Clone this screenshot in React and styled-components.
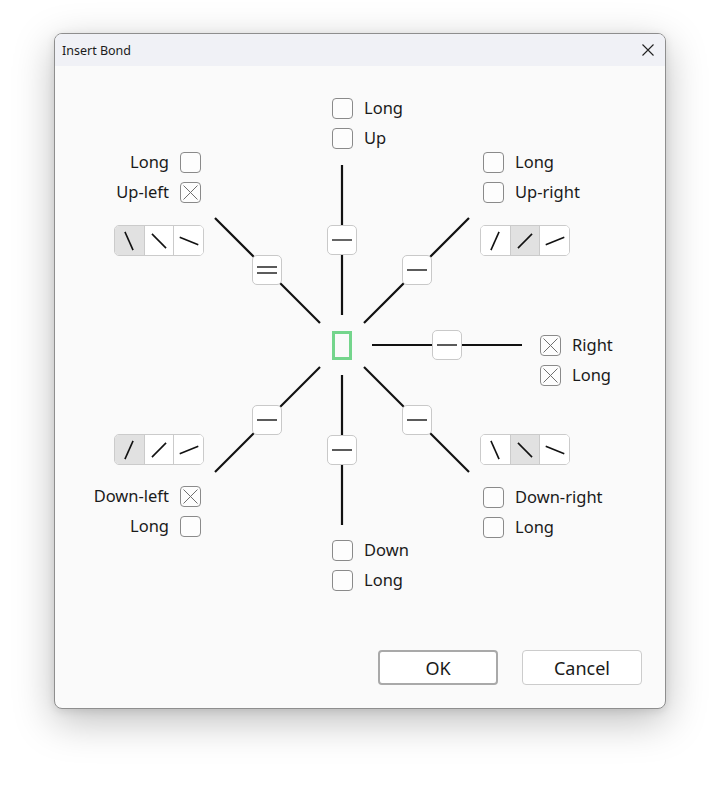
import React from 'react'
import styled, {createGlobalStyle} from 'styled-components'

const Global = createGlobalStyle`
  body {
    margin: 0;
    background: #ffffff;
    font-family: "Noto Sans", "Open Sans", sans-serif;
  }
`

const Page = styled.div`
  padding: 33px 0 0 54px;
  height: 800px;
  box-sizing: border-box;
`

const Dialog = styled.div`
  width: 612px;
  height: 676px;
  box-sizing: border-box;
  border: 1px solid #8e8e8e;
  border-radius: 8px;
  background: #fafafa;
  box-shadow: 0 12px 40px rgba(0, 0, 0, 0.26), 0 2px 8px rgba(0, 0, 0, 0.1);
  display: flex;
  flex-direction: column;
  overflow: hidden;
`

const TitleBar = styled.div`
  height: 32px;
  flex: none;
  background: #f0f1f6;
  display: flex;
  align-items: center;
  justify-content: space-between;
  padding: 0 11px 0 7px;
  font-size: 12.5px;
  color: #1b1b1b;
`

const Close = styled.svg`
  width: 12px;
  height: 12px;
`

const Canvas = styled.div`
  position: relative;
  height: 570px;
  flex: none;
`

const Bonds = styled.svg`
  position: absolute;
  inset: 0;
  width: 100%;
  height: 100%;
`

const Atom = styled.div`
  position: absolute;
  left: 277px;
  top: 265px;
  width: 20px;
  height: 29px;
  box-sizing: border-box;
  border: 3px solid #74d58c;
`

const BondButton = styled.div`
  position: absolute;
  left: ${p => p.$x - 15}px;
  top: ${p => p.$y - 15}px;
  width: 30px;
  height: 30px;
  box-sizing: border-box;
  border: 1px solid #c9c9c9;
  border-radius: 5px;
  background: #ffffff;
  display: flex;
  align-items: center;
  justify-content: center;
`

const CheckGroup = styled.div`
  position: absolute;
  top: ${p => p.$y}px;
  ${p => (p.$flip ? `right: ${610 - p.$x}px;` : `left: ${p.$x}px;`)}
  display: flex;
  flex-direction: column;
  align-items: ${p => (p.$flip ? 'flex-end' : 'flex-start')};
  gap: 9px;
`

const Row = styled.label`
  display: flex;
  flex-direction: ${p => (p.$flip ? 'row-reverse' : 'row')};
  align-items: center;
  gap: 11px;
  height: 21px;
  font-size: 16.5px;
  line-height: 20px;
  color: #1a1a1a;
  white-space: nowrap;
  & > span:last-child {
    margin-top: -2px;
  }
`

const Box = styled.span`
  width: 21px;
  height: 21px;
  box-sizing: border-box;
  border: 1px solid #8a8a8a;
  border-radius: 4px;
  background: #fdfdfd;
  display: flex;
  align-items: center;
  justify-content: center;
`

const Segmented = styled.div`
  position: absolute;
  left: ${p => p.$x}px;
  top: ${p => p.$y}px;
  width: 90px;
  height: 31px;
  box-sizing: border-box;
  border: 1px solid #cbcbcb;
  border-radius: 5px;
  background: #ffffff;
  display: flex;
  overflow: hidden;
`

const Segment = styled.div`
  flex: 1;
  display: flex;
  align-items: center;
  justify-content: center;
  background: ${p => (p.$on ? '#e1e1e1' : '#ffffff')};
  & + & {
    border-left: 1px solid #cbcbcb;
  }
`

const Footer = styled.div`
  flex: 1;
  display: flex;
  justify-content: flex-end;
  align-items: flex-start;
  gap: 24px;
  padding: 14px 23px 0 0;
`

const Button = styled.button`
  width: 120px;
  height: 35px;
  box-sizing: border-box;
  border: ${p => (p.$primary ? '2px solid #a9a9a9' : '1px solid #cccccc')};
  border-radius: 4px;
  background: #ffffff;
  font-family: "Noto Sans", "Open Sans", sans-serif;
  font-size: 18px;
  color: #1a1a1a;
  padding: 0;
`

const C = {x: 287, y: 279}
const dirs = [
  [0, -1], [1, -1], [1, 0], [1, 1], [0, 1], [-1, 1], [-1, -1],
]

function BondLines() {
  return (
    <Bonds>
      {dirs.map(([dx, dy], i) => {
        const diag = dx !== 0 && dy !== 0
        const a = diag ? 22 : 30
        const b = diag ? 127 : 180
        return (
          <line key={i} x1={C.x + dx * a} y1={C.y + dy * a} x2={C.x + dx * b} y2={C.y + dy * b}
                stroke="#111" strokeWidth="2.2"/>
        )
      })}
    </Bonds>
  )
}

function Bond({x, y, double}) {
  return (
    <BondButton $x={x} $y={y}>
      <svg width="22" height="12" viewBox="0 0 22 12">
        {double ? (
          <>
            <line x1="1" y1="3" x2="21" y2="3" stroke="#333" strokeWidth="1.6"/>
            <line x1="1" y1="9" x2="21" y2="9" stroke="#333" strokeWidth="1.6"/>
          </>
        ) : (
          <line x1="1" y1="6" x2="21" y2="6" stroke="#333" strokeWidth="1.6"/>
        )}
      </svg>
    </BondButton>
  )
}

function Check({label, checked, flip}) {
  return (
    <Row $flip={flip}>
      <Box>
        {checked && (
          <svg width="17" height="17" viewBox="0 0 17 17">
            <path d="M1.5 1.5 L15.5 15.5 M15.5 1.5 L1.5 15.5" stroke="#6f6f6f" strokeWidth="1"/>
          </svg>
        )}
      </Box>
      <span>{label}</span>
    </Row>
  )
}

function Slant({deg, back}) {
  const r = (deg * Math.PI) / 180
  const dx = Math.cos(r) * 10
  const dy = Math.sin(r) * 10
  const s = back ? 1 : -1
  return (
    <svg width="24" height="24" viewBox="0 0 24 24">
      <line x1={12 - dx} y1={12 - s * dy} x2={12 + dx} y2={12 + s * dy} stroke="#111" strokeWidth="1.6"/>
    </svg>
  )
}

function Angles({x, y, back, on}) {
  return (
    <Segmented $x={x} $y={y}>
      {[66, 45, 22].map((d, i) => (
        <Segment key={d} $on={i === on}>
          <Slant deg={d} back={back}/>
        </Segment>
      ))}
    </Segmented>
  )
}

export default function App() {
  return (
    <Page>
      <Global/>
      <Dialog>
        <TitleBar>
          <span>Insert Bond</span>
          <Close viewBox="0 0 12 12">
            <path d="M0.5 0.5 L11.5 11.5 M11.5 0.5 L0.5 11.5" stroke="#222" strokeWidth="1.1"/>
          </Close>
        </TitleBar>
        <Canvas>
          <BondLines/>
          <Atom/>
          <Bond x={287} y={174}/>
          <Bond x={362} y={204}/>
          <Bond x={392} y={279}/>
          <Bond x={362} y={354}/>
          <Bond x={287} y={384}/>
          <Bond x={212} y={354}/>
          <Bond x={212} y={204} double/>

          <CheckGroup $x={277} $y={32}>
            <Check label="Long"/>
            <Check label="Up"/>
          </CheckGroup>
          <CheckGroup $x={146} $y={86} $flip>
            <Check label="Long" flip/>
            <Check label="Up-left" checked flip/>
          </CheckGroup>
          <CheckGroup $x={428} $y={86}>
            <Check label="Long"/>
            <Check label="Up-right"/>
          </CheckGroup>
          <CheckGroup $x={485} $y={269}>
            <Check label="Right" checked/>
            <Check label="Long" checked/>
          </CheckGroup>
          <CheckGroup $x={146} $y={420} $flip>
            <Check label="Down-left" checked flip/>
            <Check label="Long" flip/>
          </CheckGroup>
          <CheckGroup $x={428} $y={421}>
            <Check label="Down-right"/>
            <Check label="Long"/>
          </CheckGroup>
          <CheckGroup $x={277} $y={474}>
            <Check label="Down"/>
            <Check label="Long"/>
          </CheckGroup>

          <Angles x={59} y={159} back on={0}/>
          <Angles x={425} y={159} on={1}/>
          <Angles x={59} y={368} on={0}/>
          <Angles x={425} y={368} back on={1}/>
        </Canvas>
        <Footer>
          <Button $primary>OK</Button>
          <Button>Cancel</Button>
        </Footer>
      </Dialog>
    </Page>
  )
}
